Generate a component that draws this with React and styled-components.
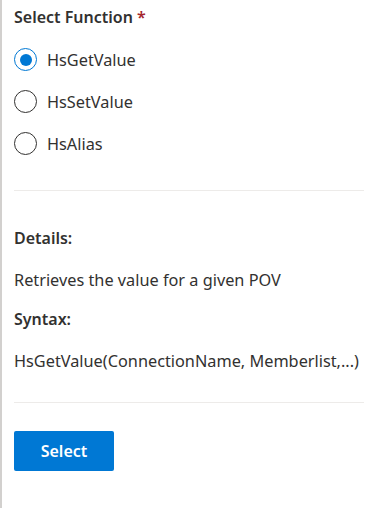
import React, { useState } from 'react';
import styled, { createGlobalStyle } from 'styled-components';

const GlobalStyle = createGlobalStyle`
  html, body {
    margin: 0;
    padding: 0;
    background: #ffffff;
  }
  body {
    font-family: "Segoe UI", "Noto Sans", "Open Sans", sans-serif;
    color: #323130;
  }
`

const Panel = styled.div`
  min-height: 508px;
  border-left: 2px solid #d2d0ce;
  padding: 0 11px 0 12px;
  box-sizing: border-box;
  display: flow-root;
`

const FieldLabel = styled.div`
  font-size: 16px;
  font-weight: 600;
  line-height: 22px;
  padding: 6px 0 0;

  span {
    color: #a4262c;
    padding-left: 4px;
  }
`

const RadioList = styled.div`
  display: flex;
  flex-direction: column;
  gap: 19px;
  padding-top: 20px;
`

const RadioRow = styled.label`
  display: flex;
  align-items: center;
  gap: 10px;
  font-size: 16.3px;
  line-height: 22px;
  cursor: pointer;
`

const RadioCircle = styled.span`
  width: 23px;
  height: 23px;
  border-radius: 50%;
  box-sizing: border-box;
  border: 1.5px solid ${({ $checked }) => ($checked ? '#0078d4' : '#323130')};
  display: flex;
  align-items: center;
  justify-content: center;

  &::after {
    content: '';
    width: 12px;
    height: 12px;
    border-radius: 50%;
    background: #0078d4;
    display: ${({ $checked }) => ($checked ? 'block' : 'none')};
  }
`

const Divider = styled.div`
  height: 1px;
  background: #edebe9;
  margin: ${({ $gap }) => $gap};
`

const SectionTitle = styled.div`
  font-size: 16px;
  font-weight: 600;
  line-height: 22px;
`

const SectionText = styled.div`
  font-size: 16.3px;
  line-height: 22px;
  margin: 20px 0 17px;
`

const PrimaryButton = styled.button`
  display: block;
  width: 100px;
  height: 40px;
  border: none;
  border-radius: 2px;
  background: #0078d4;
  color: #ffffff;
  font-family: inherit;
  font-size: 16px;
  font-weight: 600;
  cursor: pointer;
`

const functions = ['HsGetValue', 'HsSetValue', 'HsAlias']

const App = () => {
  const [selected, setSelected] = useState('HsGetValue');

  return (
    <Panel>
      <GlobalStyle />
      <FieldLabel>
        Select Function<span>*</span>
      </FieldLabel>
      <RadioList>
        {functions.map((fn) => (
          <RadioRow key={fn} onClick={() => setSelected(fn)}>
            <RadioCircle $checked={selected === fn} />
            {fn}
          </RadioRow>
        ))}
      </RadioList>
      <Divider $gap="35px 0 36px" />
      <SectionTitle>Details:</SectionTitle>
      <SectionText>Retrieves the value for a given POV</SectionText>
      <SectionTitle>Syntax:</SectionTitle>
      <SectionText>HsGetValue(ConnectionName, Memberlist,...)</SectionText>
      <Divider $gap="30px 0 28px" />
      <PrimaryButton>Select</PrimaryButton>
    </Panel>
  )
};

export default App;
